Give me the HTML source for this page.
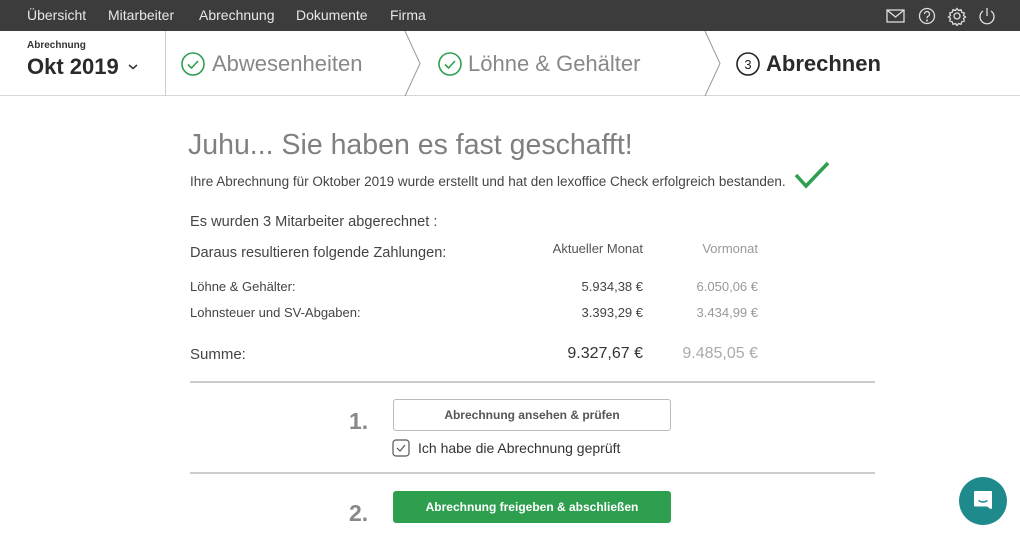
<!DOCTYPE html>
<html><head><meta charset="utf-8"><style>
*{margin:0;padding:0;box-sizing:border-box}
body{width:1020px;height:549px;overflow:hidden;background:#fff;font-family:"Liberation Sans",sans-serif;position:relative;color:#444}
.a{position:absolute;white-space:nowrap}
.nav{position:absolute;left:0;top:0;width:1020px;height:31px;background:#3c3c3c}
.nav span{position:absolute;top:7px;color:#e8e8e8;font-size:14px}
.hdr{position:absolute;left:0;top:31px;width:1020px;height:65px;border-bottom:1px solid #d6d6d6}
.r{text-align:right}
</style></head><body>
<div class="nav">
<span style="left:27px">Übersicht</span>
<span style="left:108px">Mitarbeiter</span>
<span style="left:199px">Abrechnung</span>
<span style="left:296px">Dokumente</span>
<span style="left:390px">Firma</span>
<svg class="a" style="left:885px;top:6px" width="110" height="20" fill="none" stroke="#ddd" stroke-width="1.3">
<rect x="2" y="4" width="17" height="12"/><path d="M2 4l8.5 7 8.5-7"/>
<circle cx="42" cy="10" r="7.5"/><path d="M39.5 8a2.5 2.5 0 1 1 3.5 2.3c-1 .5-1 1-1 2"/><circle cx="42" cy="14.5" r=".4" fill="#ddd"/>
<circle cx="72" cy="10" r="3"/><path d="M72 2.5l1.5 2 2.5-.8.8 2.5 2.5.8-.8 2.5 2 1.5-2 1.5.8 2.5-2.5.8-.8 2.5-2.5-.8-1.5 2-1.5-2-2.5.8-.8-2.5-2.5-.8.8-2.5-2-1.5 2-1.5-.8-2.5 2.5-.8.8-2.5 2.5.8z"/>
<path d="M98 5a7 7 0 1 0 8 0M102 2v8"/>
</svg>
</div>
<div class="hdr">
<div class="a" style="left:27px;top:9px;font-size:10px;font-weight:bold;color:#333">Abrechnung</div>
<div class="a" style="left:27px;top:23px;font-size:22px;font-weight:bold;color:#2a2a2a">Okt 2019</div>
<svg class="a" style="left:128px;top:33px" width="10" height="6"><path d="M1 1l4 3.5L9 1" stroke="#333" stroke-width="1.5" fill="none"/></svg>
<div class="a" style="left:165px;top:0;width:1px;height:65px;background:#ccc"></div>
<svg class="a" style="left:400px;top:0" width="330" height="65" fill="none" stroke="#999" stroke-width="1"><path d="M5 0l15 32.5L5 65M305 0l15 32.5L305 65"/></svg>
<svg class="a" style="left:181px;top:21px" width="24" height="24" fill="none" stroke="#2e9e4f" stroke-width="1.6"><circle cx="12" cy="12" r="11"/><path d="M7 12.5l3.5 3.5 6.5-7"/></svg>
<div class="a" style="left:212px;top:20px;font-size:22px;color:#888">Abwesenheiten</div>
<svg class="a" style="left:438px;top:21px" width="24" height="24" fill="none" stroke="#2e9e4f" stroke-width="1.6"><circle cx="12" cy="12" r="11"/><path d="M7 12.5l3.5 3.5 6.5-7"/></svg>
<div class="a" style="left:468px;top:20px;font-size:22px;color:#888">Löhne &amp; Gehälter</div>
<svg class="a" style="left:736px;top:21px" width="24" height="24" fill="none" stroke="#222" stroke-width="1.6"><circle cx="12" cy="12" r="11"/><text x="12" y="17" font-size="13" text-anchor="middle" fill="#222" stroke="none" font-family="Liberation Sans">3</text></svg>
<div class="a" style="left:766px;top:20px;font-size:22px;font-weight:bold;color:#2a2a2a">Abrechnen</div>
</div>
<div class="a" style="left:188px;top:129px;font-size:28.5px;color:#808080">Juhu... Sie haben es fast geschafft!</div>
<div class="a" style="left:190px;top:174px;font-size:13.5px;color:#444">Ihre Abrechnung für Oktober 2019 wurde erstellt und hat den lexoffice Check erfolgreich bestanden.</div>
<svg class="a" style="left:794px;top:160px" width="36" height="30"><path d="M2 15l10 11L34 3" stroke="#2e9e4f" stroke-width="3.5" fill="none"/></svg>
<div class="a" style="left:190px;top:214px;font-size:14.6px;color:#444">Es wurden 3 Mitarbeiter abgerechnet :</div>
<div class="a" style="left:190px;top:245px;font-size:14.6px;color:#444">Daraus resultieren folgende Zahlungen:</div>
<div class="a r" style="left:500px;width:143px;top:241px;font-size:13px;color:#555">Aktueller Monat</div>
<div class="a r" style="left:660px;width:98px;top:241px;font-size:13px;color:#999">Vormonat</div>
<div class="a" style="left:190px;top:279px;font-size:13px;color:#444">Löhne &amp; Gehälter:</div>
<div class="a r" style="left:500px;width:143px;top:279px;font-size:13px;color:#444">5.934,38 €</div>
<div class="a r" style="left:660px;width:98px;top:279px;font-size:13px;color:#999">6.050,06 €</div>
<div class="a" style="left:190px;top:305px;font-size:13px;color:#444">Lohnsteuer und SV-Abgaben:</div>
<div class="a r" style="left:500px;width:143px;top:305px;font-size:13px;color:#444">3.393,29 €</div>
<div class="a r" style="left:660px;width:98px;top:305px;font-size:13px;color:#999">3.434,99 €</div>
<div class="a" style="left:190px;top:346px;font-size:15px;color:#444">Summe:</div>
<div class="a r" style="left:500px;width:143px;top:345px;font-size:16px;color:#333">9.327,67 €</div>
<div class="a r" style="left:660px;width:98px;top:345px;font-size:16px;color:#aaa">9.485,05 €</div>
<div class="a" style="left:190px;top:381px;width:685px;height:2px;background:#ccc"></div>
<div class="a" style="left:349px;top:408px;font-size:23px;font-weight:bold;color:#888">1.</div>
<div class="a" style="left:393px;top:399px;width:278px;height:32px;border:1px solid #bbb;border-radius:3px;text-align:center;line-height:30px;font-size:12px;font-weight:bold;color:#555">Abrechnung ansehen &amp; prüfen</div>
<svg class="a" style="left:392px;top:439px" width="18" height="18" fill="none" stroke="#555" stroke-width="1.2"><rect x="1" y="1" width="16" height="16" rx="3"/><path d="M5 9l3 3 5-6"/></svg>
<div class="a" style="left:418px;top:440px;font-size:14px;color:#333">Ich habe die Abrechnung geprüft</div>
<div class="a" style="left:190px;top:472px;width:685px;height:2px;background:#ccc"></div>
<div class="a" style="left:349px;top:500px;font-size:23px;font-weight:bold;color:#888">2.</div>
<div class="a" style="left:393px;top:491px;width:278px;height:32px;background:#2e9e4f;border-radius:3px;text-align:center;line-height:32px;font-size:12px;font-weight:bold;color:#fff">Abrechnung freigeben &amp; abschließen</div>
<svg class="a" style="left:958px;top:476px" width="50" height="50"><circle cx="25" cy="25" r="24" fill="#1f8a8c"/><path d="M17 16h16v16l-3.5-2.5H17z" fill="#fff" stroke="#fff" stroke-linejoin="round" stroke-width="2"/><path d="M20.5 24.5q4.5 3 9 0" stroke="#1f8a8c" stroke-width="1.4" fill="none"/></svg>
</body></html>
